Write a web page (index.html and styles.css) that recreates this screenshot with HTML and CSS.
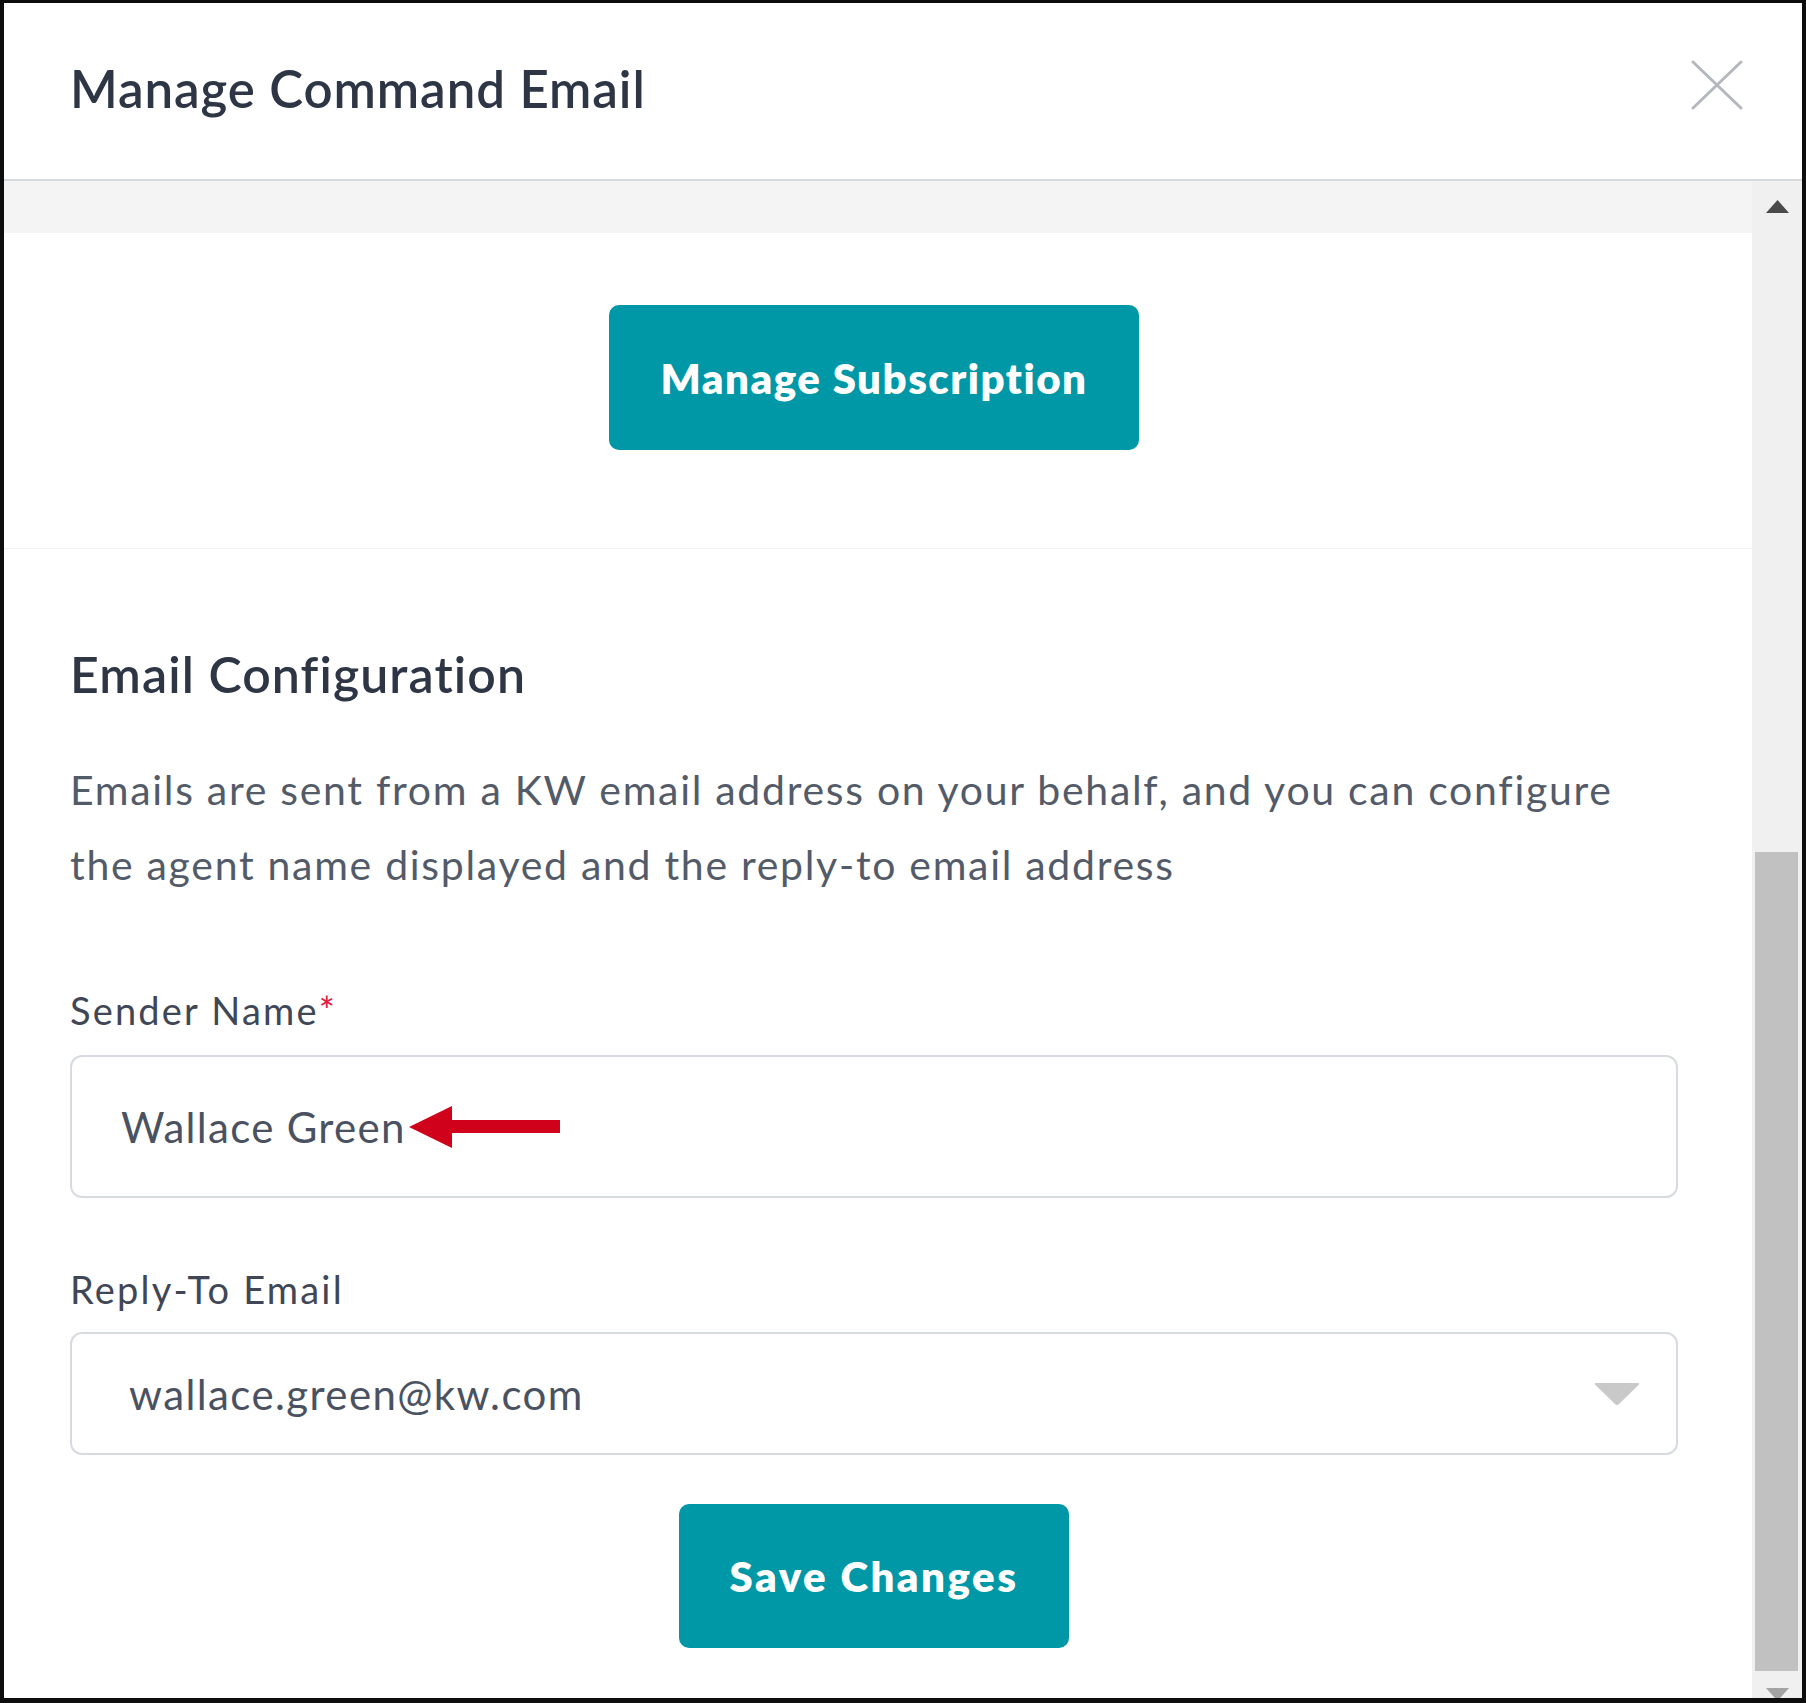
FILE: index.html
```html
<!DOCTYPE html>
<html lang="en">
<head>
<meta charset="utf-8">
<title>Manage Command Email</title>
<link rel="stylesheet" href="styles.css">
</head>
<body>
<div class="frame">
  <header class="header">
    <h1 class="title">Manage Command Email</h1>
    <button class="close" aria-label="Close">
      <svg width="52" height="50" viewBox="0 0 52 50"><path d="M2 2 L50 48 M50 2 L2 48" stroke="#b4b8be" stroke-width="3" stroke-linecap="round" fill="none"/></svg>
    </button>
  </header>
  <div class="main">
    <div class="content">
      <div class="band"></div>
      <section class="subscription">
        <button class="btn btn-sub">Manage Subscription</button>
      </section>
      <section class="config">
        <h2 class="heading">Email Configuration</h2>
        <p class="desc">Emails are sent from a KW email address on your behalf, and you can configure the agent name displayed and the reply-to email address</p>
        <label class="label">Sender Name<span class="req">*</span></label>
        <div class="field">
          <span class="value value-name">Wallace Green</span>
          <svg class="arrow" width="151" height="42" viewBox="0 0 151 42"><path d="M0 21 L43 0 L43 14 L151 14 L151 27 L43 27 L43 42 Z" fill="#d0021b"/></svg>
        </div>
        <label class="label label-2">Reply-To Email</label>
        <div class="field select">
          <span class="value value-email">wallace.green@kw.com</span>
          <svg class="caret" width="48" height="24" viewBox="0 0 48 24"><path d="M3 1 L45 1 Q47 1 46 2.5 L26 22 Q24 24 22 22 L2 2.5 Q1 1 3 1 Z" fill="#c9c9c9"/></svg>
        </div>
        <div class="actions">
          <button class="btn btn-save">Save Changes</button>
        </div>
      </section>
    </div>
    <div class="scrollbar">
      <div class="sb-up"><svg width="23" height="13" viewBox="0 0 23 13"><path d="M11.5 0 L23 13 L0 13 Z" fill="#4a4a4a"/></svg></div>
      <div class="sb-track"></div>
      <div class="sb-thumb"></div>
      <div class="sb-down"><svg width="23" height="13" viewBox="0 0 23 13"><path d="M0 0 L23 0 L11.5 13 Z" fill="#a3a3a3"/></svg></div>
    </div>
  </div>
</div>
</body>
</html>
```

FILE: styles.css
```css
html, body {
  margin: 0;
  padding: 0;
  background: #fff;
}

body {
  font-family: Lato, "Noto Sans", sans-serif;
}

.frame {
  width: 1806px;
  height: 1703px;
  box-sizing: border-box;
  border: solid #0d0d0d;
  border-width: 3px 4px 5px 4px;
  display: flex;
  flex-direction: column;
  overflow: hidden;
  background: #fff;
}

.header {
  flex-shrink: 0;
  height: 178px;
  box-sizing: border-box;
  border-bottom: 2px solid #d6dadd;
  display: flex;
  justify-content: space-between;
  align-items: flex-start;
  padding: 56px 59px 0 66px;
}

.title {
  margin: 0;
  font-size: 51px;
  line-height: 60px;
  font-weight: 600;
  letter-spacing: 0.9px;
  color: #2e3646;
}

.close {
  border: 0;
  background: none;
  padding: 0;
  margin-top: 1px;
  width: 52px;
  height: 50px;
  cursor: pointer;
}

.close svg {
  display: block;
}

.main {
  flex: 1;
  display: flex;
  min-height: 0;
}

.content {
  flex: 1;
  overflow: hidden;
}

.band {
  height: 52px;
  background: #f4f4f4;
}

.subscription {
  padding: 72px 74px 98px 66px;
  border-bottom: 1px solid #f1f2f3;
  display: flex;
  justify-content: center;
}

.btn {
  font-family: inherit;
  font-size: 42px;
  font-weight: 800;
  color: #fff;
  background: #0097a7;
  border: 0;
  border-radius: 10px;
  padding: 0 51px;
  height: 145px;
  cursor: pointer;
}

.btn-sub {
  letter-spacing: 1.5px;
}

.config {
  padding: 0 74px 0 66px;
}

.heading {
  margin: 96px 0 0;
  font-size: 50px;
  line-height: 58px;
  font-weight: 600;
  letter-spacing: 1.1px;
  color: #2e3646;
}

.desc {
  margin: 49px 0 0;
  max-width: 1570px;
  font-size: 41px;
  line-height: 75px;
  letter-spacing: 1.7px;
  color: #535b69;
}

.label {
  display: block;
  margin-top: 88px;
  font-size: 38px;
  line-height: 40px;
  letter-spacing: 2.2px;
  color: #3f4756;
}

.label-2 {
  margin-top: 71px;
}

.req {
  color: #e3173f;
  letter-spacing: 0;
}

.field {
  margin-top: 25px;
  height: 143px;
  box-sizing: border-box;
  border: 2px solid #d7dbe0;
  border-radius: 12px;
  display: flex;
  align-items: center;
  padding-left: 49px;
  font-size: 42px;
  color: #4a5262;
}

.value-name {
  letter-spacing: 1.3px;
}

.value-email {
  letter-spacing: 1.4px;
}

.arrow {
  margin-left: 3px;
  display: block;
}

.select {
  margin-top: 23px;
  height: 123px;
  padding: 0 35px 0 57px;
  justify-content: space-between;
}

.caret {
  display: block;
}

.actions {
  display: flex;
  justify-content: center;
  margin-top: 49px;
}

.btn-save {
  height: 144px;
  letter-spacing: 2.5px;
}

.scrollbar {
  width: 50px;
  flex-shrink: 0;
  background: #f0f0f0;
  display: flex;
  flex-direction: column;
  overflow: hidden;
}

.sb-up {
  height: 50px;
  flex-shrink: 0;
  box-sizing: border-box;
  padding-top: 19px;
  display: flex;
  justify-content: center;
}

.sb-track {
  height: 621px;
  flex-shrink: 0;
}

.sb-thumb {
  height: 819px;
  flex-shrink: 0;
  margin: 0 4px 0 3px;
  background: #c1c1c1;
}

.sb-down {
  height: 27px;
  flex-shrink: 0;
  box-sizing: border-box;
  padding-top: 17px;
  display: flex;
  justify-content: center;
}

.sb-up svg, .sb-down svg {
  display: block;
}
```
